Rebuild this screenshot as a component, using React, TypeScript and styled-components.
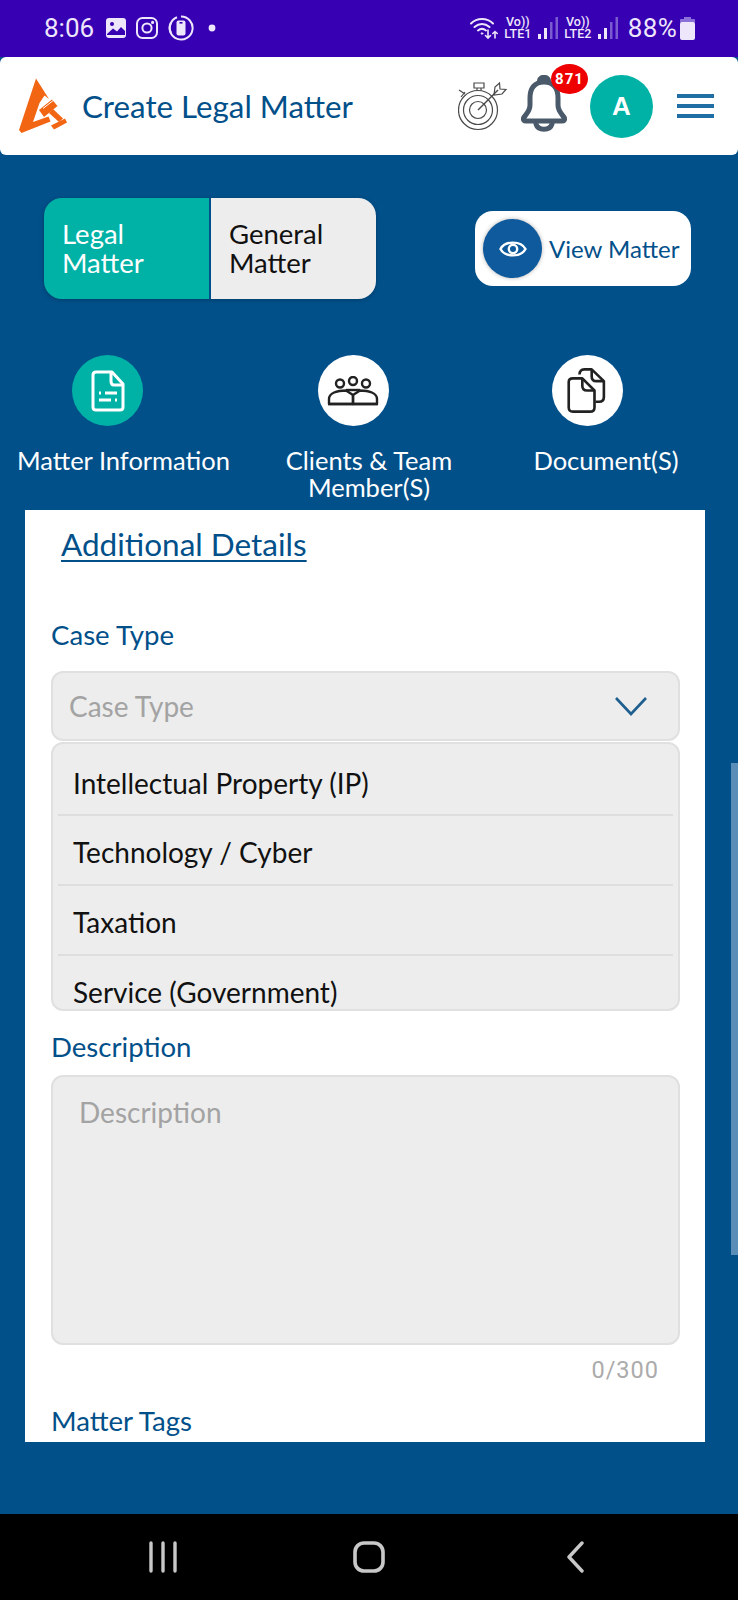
import styled, { createGlobalStyle } from 'styled-components'

const GlobalStyle = createGlobalStyle`
    html, body {
        margin: 0;
        padding: 0;
        background: #02508a;
    }
    * {
        box-sizing: border-box;
    }
`

const Page = styled.div`
    position: relative;
    width: 738px;
    height: 1600px;
    display: flex;
    flex-direction: column;
    overflow: hidden;
    background: #02508a;
    font-family: Lato, "Open Sans", sans-serif;
`
const StatusBar = styled.div`
    height: 57px;
    flex: none;
    background: #3700b3;
    color: #eee6fb;
    font-family: Roboto, sans-serif;
    display: flex;
    align-items: center;
    justify-content: space-between;
    padding: 0 43px 1px 44px;
`
const StatusGroup = styled.div`
    display: flex;
    align-items: center;
    gap: ${(p: { $gap: number }) => p.$gap}px;
`
const Time = styled.span`
    font-size: 26px;
    margin-right: 2px;
`
const Percent = styled.span`
    font-size: 26px;
    letter-spacing: 0.3px;
    margin-left: 4px;
    margin-right: -3px;
`
const VoLte = styled.div`
    width: 28px;
    display: flex;
    flex-direction: column;
    align-items: center;
    font-size: 12.5px;
    font-weight: 500;
    line-height: 12px;
    white-space: nowrap;
`
const Header = styled.div`
    height: 98px;
    flex: none;
    background: #fff;
    border-radius: 6px;
    display: flex;
    align-items: center;
    padding: 0 24px 0 17px;
`
const Title = styled.h1`
    margin: 0 0 0 15px;
    font-size: 31.3px;
    font-weight: 400;
    color: #02508a;
    white-space: nowrap;
`
const HeaderActions = styled.div`
    margin-left: auto;
    display: flex;
    align-items: center;
`
const BellWrap = styled.div`
    position: relative;
    width: 48px;
    height: 58px;
    margin-left: 12px;
    margin-top: -5px;
`
const Badge = styled.div`
    position: absolute;
    left: 31px;
    top: -11px;
    width: 37px;
    height: 30px;
    border-radius: 50%;
    background: #ee0000;
    color: #fff;
    font-family: Roboto, sans-serif;
    font-size: 15px;
    font-weight: 700;
    letter-spacing: 1px;
    display: flex;
    align-items: center;
    justify-content: center;
`
const Avatar = styled.div`
    width: 63px;
    height: 63px;
    border-radius: 50%;
    background: #00b2a6;
    color: #fff;
    font-family: "Liberation Sans", sans-serif;
    font-size: 26px;
    font-weight: 700;
    display: flex;
    align-items: center;
    justify-content: center;
    margin-left: 22px;
`
const Burger = styled.div`
    width: 37px;
    margin-left: 24px;
    display: flex;
    flex-direction: column;
    gap: 6px;
`
const BurgerLine = styled.span`
    height: 4px;
    background: #1f6fa5;
`
const TopRow = styled.div`
    display: flex;
    align-items: center;
    justify-content: space-between;
    padding: 43px 47px 0 44px;
`
const Toggle = styled.div`
    width: 332px;
    height: 101px;
    display: flex;
    border-radius: 18px;
    overflow: hidden;
    box-shadow: 0 1px 4px rgba(0, 0, 0, 0.25);
`
const ToggleOption = styled.div<{ $active?: boolean }>`
    width: ${(p) => (p.$active ? '165px' : '167px')};
    background: ${(p) => (p.$active ? '#00b2a6' : '#ededed')};
    color: ${(p) => (p.$active ? '#fff' : '#111')};
    border-left: ${(p) => (p.$active ? 'none' : '2px solid #02508a')};
    font-size: 27.5px;
    line-height: 29px;
    padding: 21px 0 0 18px;
`
const ViewButton = styled.div`
    width: 216px;
    height: 75px;
    background: #fff;
    border-radius: 18px;
    display: flex;
    align-items: center;
    padding-left: 8px;
    color: #02508a;
    font-size: 24px;
    white-space: nowrap;
`
const EyeCircle = styled.div`
    width: 59px;
    height: 59px;
    border-radius: 50%;
    background: #0f5a9c;
    box-shadow: 0 0 4px rgba(0, 0, 0, 0.3);
    display: flex;
    align-items: center;
    justify-content: center;
    margin-right: 7px;
`
const Steps = styled.div`
    display: grid;
    grid-template-columns: 247px 244px 230px;
    margin-top: 56px;
    height: 155px;
`
const Step = styled.div`
    display: flex;
    flex-direction: column;
    align-items: center;
`
const StepCircle = styled.div<{ $active?: boolean; $shift: number }>`
    width: 71px;
    height: 71px;
    border-radius: 50%;
    background: ${(p) => (p.$active ? '#00b2a6' : '#fff')};
    margin-right: ${(p) => p.$shift}px;
    display: flex;
    align-items: center;
    justify-content: center;
`
const StepLabel = styled.div`
    margin-top: 21px;
    color: #fff;
    font-size: 25.5px;
    line-height: 27px;
    text-align: center;
    white-space: nowrap;
`
const Panel = styled.div`
    height: 932px;
    margin: 0 33px 0 25px;
    background: #fff;
    overflow: hidden;
    padding: 0 25px 0 26px;
`
const SectionLink = styled.a`
    display: block;
    margin: 16px 0 0 10px;
    color: #02508a;
    font-size: 31.5px;
    line-height: 37px;
    text-decoration: underline;
    text-decoration-thickness: 2px;
    text-underline-offset: 4px;
`
const FieldLabel = styled.div<{ $top: number }>`
    margin-top: ${(p) => p.$top}px;
    color: #02508a;
    font-size: 27.6px;
    line-height: 34px;
`
const Select = styled.div`
    height: 70px;
    margin-top: 19px;
    background: #ededed;
    border: 2px solid #e0e0e0;
    border-radius: 12px;
    display: flex;
    align-items: center;
    justify-content: space-between;
    padding: 0 30px 0 16px;
    color: #a3a3a3;
    font-size: 28px;
`
const Dropdown = styled.div`
    height: 269px;
    margin-top: 1px;
    background: #ededed;
    border: 2px solid #e0e0e0;
    border-radius: 12px;
    overflow: hidden;
    padding: 0 5px;
`
const Option = styled.div`
    height: 70px;
    display: flex;
    align-items: center;
    padding: 4px 0 0 15px;
    color: #111;
    font-size: 28px;
    border-bottom: 2px solid #dedede;
    white-space: nowrap;
    &:first-child {
        height: 72px;
        padding-top: 8px;
    }
`
const TextArea = styled.div`
    height: 270px;
    margin-top: 11px;
    background: #ededed;
    border: 2px solid #e0e0e0;
    border-radius: 12px;
    padding: 18px 26px;
    color: #a3a3a3;
    font-size: 28px;
    line-height: 34px;
`
const Counter = styled.div`
    margin-top: 11px;
    padding-right: 21px;
    text-align: right;
    color: #ababab;
    font-family: Roboto, sans-serif;
    font-size: 23.5px;
    line-height: 28px;
    letter-spacing: 1px;
`
const NavBar = styled.div`
    height: 86px;
    flex: none;
    margin-top: auto;
    background: #000;
    display: flex;
    align-items: center;
    justify-content: center;
`
const NavCell = styled.div`
    width: 206px;
    display: flex;
    justify-content: center;
`
const Scrollbar = styled.div`
    position: absolute;
    right: 0;
    top: 763px;
    width: 7px;
    height: 492px;
    background: #5a8db8;
`

const Logo = () => (
    <svg width="50" height="70" viewBox="5 0 50 70">
        <path d="M24 7.5 L7 59 L9.5 62 L38.5 50.5 L36.5 45.5 L21 51 L27.5 32 L32.5 24.5 L37 28 Z" fill="#f26513" />
        <path d="M27 39 L40 28.5 L45.5 35 L32 46 Z" fill="#f26513" />
        <path d="M37 42 L41 38 L51 47.5 L47 51 Z" fill="#f26513" />
        <path d="M39 54.5 L53 47.5 L55 51.5 L42 58.5 Z" fill="#f26513" />
        <path d="M31 37.5 L42.5 28.5" stroke="#fff" strokeWidth="1" />
    </svg>
)

const PictureIcon = () => (
    <svg width="20" height="20" viewBox="0 0 20 20">
        <rect width="20" height="20" rx="3" fill="#eee6fb" />
        <circle cx="6" cy="6" r="2" fill="#3700b3" />
        <path d="M1 16 L7 10.5 L11 13.5 L15 9 L19 13 L19 17 L1 17 Z" fill="#3700b3" />
    </svg>
)

const InstagramIcon = () => (
    <svg width="22" height="22" viewBox="0 0 22 22" fill="none" stroke="#eee6fb" strokeWidth="2">
        <rect x="1" y="1" width="20" height="20" rx="5.5" />
        <circle cx="11" cy="11" r="4.6" />
        <circle cx="16.6" cy="5.4" r="0.6" fill="#eee6fb" />
    </svg>
)

const PhoneRingIcon = () => (
    <svg width="26" height="26" viewBox="0 0 26 26">
        <path d="M13 1.5 A11.5 11.5 0 1 1 3 7.5" fill="none" stroke="#eee6fb" strokeWidth="2" />
        <path d="M3 18 A11.5 11.5 0 0 1 9 2.2" fill="none" stroke="#eee6fb" strokeWidth="2" />
        <rect x="8.5" y="5.5" width="9" height="15" rx="2" fill="#eee6fb" />
        <rect x="11.5" y="7" width="3" height="1.6" fill="#3700b3" />
    </svg>
)

const WifiIcon = () => (
    <svg width="28" height="24" viewBox="0 0 28 24" fill="none" stroke="#eee6fb" strokeLinecap="round" strokeWidth="2">
        <path d="M1 7.5 C7 1.5 17 1.5 23 7.5" />
        <path d="M4.5 11 C9 7 15 7 19.5 11" />
        <path d="M8 14.5 C10.5 12.5 13.5 12.5 16 14.5" />
        <circle cx="12" cy="17.5" r="0.8" fill="#eee6fb" strokeWidth="1" />
        <path d="M18 14 V22 M15.5 19.5 L18 22 L20.5 19.5" strokeWidth="1.6" />
        <path d="M25 22 V15.5 M22.8 17.5 L25 15.5 L27.2 17.5" strokeWidth="1.6" />
    </svg>
)

const SignalBars = () => (
    <svg width="20" height="24" viewBox="0 0 20 24">
        <rect x="0" y="18" width="3" height="5" fill="#eee6fb" />
        <rect x="6" y="12" width="3" height="11" fill="#eee6fb" />
        <rect x="12" y="6" width="2.5" height="17" fill="#7a5bd0" />
        <rect x="17.5" y="1" width="2.5" height="22" fill="#7a5bd0" />
    </svg>
)

const BatteryIcon = () => (
    <svg width="15" height="23" viewBox="0 0 15 23">
        <rect x="4" y="0" width="7" height="3" fill="#8a70d8" />
        <rect x="0" y="2" width="15" height="4" rx="1" fill="#8a70d8" />
        <rect x="0" y="5" width="15" height="18" rx="2" fill="#eee6fb" />
    </svg>
)

const TargetIcon = () => (
    <svg width="50" height="50" viewBox="0 0 50 50" fill="none" stroke="#4a4a4a" strokeWidth="1.2">
        <circle cx="20" cy="29" r="19.5" />
        <circle cx="20" cy="29" r="14.5" />
        <circle cx="20" cy="29" r="8.5" />
        <path d="M20 29 L40 9" strokeWidth="1.4" />
        <path d="M36 14 L37 6 L41.5 2 L42 8 L48 8.5 L44 13 Z" />
        <path d="M16 2 H26 V7 H16 Z M19 7 V9.5 M23 7 V9.5" />
        <path d="M3 16 L7 11 M1 9 L7 13" />
    </svg>
)

const BellIcon = () => (
    <svg width="48" height="58" viewBox="0 0 48 58" fill="none" stroke="#4b5a6b" strokeWidth="5" strokeLinejoin="round" strokeLinecap="round">
        <path d="M24 7 C14 7 10 14 10 23 V30 C10 36 7 38 3.5 43 C3 45 4 46 6 46 H42 C44 46 45 45 44.5 43 C41 38 38 36 38 30 V23 C38 14 34 7 24 7 Z" />
        <path d="M20 5.5 C20 2 28 2 28 5.5" strokeWidth="6" />
        <path d="M16 49 C18 56 30 56 32 49" />
    </svg>
)

const DocListIcon = () => (
    <svg width="34" height="42" viewBox="0 0 34 42" fill="none" stroke="#fff" strokeWidth="3" strokeLinejoin="round">
        <path d="M5 2 H21 L32 14 V37 C32 39 31 40 29 40 H5 C3 40 2 39 2 37 V5 C2 3 3 2 5 2 Z" />
        <path d="M20 2 V11 C20 13 21 15 23 15 H32" />
        <path d="M8 23 H10 M14 23 H26 M8 30 H20 M24 30 H26" />
    </svg>
)

const TeamIcon = () => (
    <svg width="52" height="30" viewBox="0 0 52 30" fill="none" stroke="#222" strokeWidth="2.4" strokeLinejoin="round">
        <circle cx="13" cy="7.5" r="4" />
        <circle cx="26" cy="5" r="4" />
        <circle cx="39" cy="7.5" r="4" />
        <path d="M2 28 V23 C2 17 10 14.5 19 14.5 L26 19 V28 Z" />
        <path d="M50 28 V23 C50 17 42 14.5 33 14.5 L26 19 V28 Z" />
        <path d="M1 28 H51" />
        <path d="M19 14 H33" />
    </svg>
)

const DocsIcon = () => (
    <svg width="40" height="45" viewBox="0 0 42 48" fill="none" stroke="#222" strokeWidth="2.8" strokeLinejoin="round">
        <path d="M13 7 C13 3 15 1.5 18 1.5 H26 L39 14 V31 C39 34 37 36 34 36 H30" />
        <path d="M26 1.5 V9 C26 12 28 14 31 14 H39" />
        <path d="M6 11 H16 L29 24 V42 C29 45 27 46.5 24 46.5 H6 C3 46.5 1.5 45 1.5 42 V15 C1.5 12.5 3 11 6 11 Z" />
        <path d="M16 11 V19 C16 22 18 24 21 24 H29" />
    </svg>
)

const EyeIcon = () => (
    <svg width="28" height="24" viewBox="0 0 28 24" fill="none" stroke="#fff" strokeWidth="2.4">
        <path d="M1.5 12 C6 3.5 22 3.5 26.5 12 C22 20.5 6 20.5 1.5 12 Z" />
        <circle cx="14" cy="12" r="4.2" />
    </svg>
)

const ChevronIcon = () => (
    <svg width="34" height="20" viewBox="0 0 34 20" fill="none" stroke="#1f5f8f" strokeWidth="2.6">
        <path d="M2 2 L17 18 L32 2" />
    </svg>
)

const RecentsIcon = () => (
    <svg width="30" height="32" viewBox="0 0 30 32" stroke="#c8c8c8" strokeWidth="3.4" strokeLinecap="round">
        <path d="M3 2 V30 M15 2 V30 M27 2 V30" />
    </svg>
)

const HomeIcon = () => (
    <svg width="32" height="32" viewBox="0 0 32 32" fill="none" stroke="#c8c8c8" strokeWidth="3.6">
        <rect x="2" y="2" width="28" height="28" rx="9" />
    </svg>
)

const BackIcon = () => (
    <svg width="18" height="32" viewBox="0 0 18 32" fill="none" stroke="#c8c8c8" strokeWidth="3.4" strokeLinecap="round" strokeLinejoin="round">
        <path d="M16 2 L3 16 L16 30" />
    </svg>
)

export default function App() {
    return (
        <Page>
            <GlobalStyle />
            <StatusBar>
                <StatusGroup $gap={10}>
                    <Time>8:06</Time>
                    <PictureIcon />
                    <InstagramIcon />
                    <PhoneRingIcon />
                    <svg width="16" height="8" viewBox="0 0 16 8"><circle cx="8" cy="4" r="3.4" fill="#eee6fb" /></svg>
                </StatusGroup>
                <StatusGroup $gap={6}>
                    <WifiIcon />
                    <VoLte><span>Vo))</span><span>LTE1</span></VoLte>
                    <SignalBars />
                    <VoLte><span>Vo))</span><span>LTE2</span></VoLte>
                    <SignalBars />
                    <Percent>88%</Percent>
                    <BatteryIcon />
                </StatusGroup>
            </StatusBar>
            <Header>
                <Logo />
                <Title>Create Legal Matter</Title>
                <HeaderActions>
                    <TargetIcon />
                    <BellWrap>
                        <BellIcon />
                        <Badge>871</Badge>
                    </BellWrap>
                    <Avatar>A</Avatar>
                    <Burger>
                        <BurgerLine />
                        <BurgerLine />
                        <BurgerLine />
                    </Burger>
                </HeaderActions>
            </Header>
            <TopRow>
                <Toggle>
                    <ToggleOption $active>Legal<br />Matter</ToggleOption>
                    <ToggleOption>General<br />Matter</ToggleOption>
                </Toggle>
                <ViewButton>
                    <EyeCircle><EyeIcon /></EyeCircle>
                    View Matter
                </ViewButton>
            </TopRow>
            <Steps>
                <Step>
                    <StepCircle $active $shift={32}><DocListIcon /></StepCircle>
                    <StepLabel>Matter Information</StepLabel>
                </Step>
                <Step>
                    <StepCircle $shift={32}><TeamIcon /></StepCircle>
                    <StepLabel>Clients &amp; Team<br />Member(S)</StepLabel>
                </Step>
                <Step>
                    <StepCircle $shift={38}><DocsIcon /></StepCircle>
                    <StepLabel>Document(S)</StepLabel>
                </Step>
            </Steps>
            <Panel>
                <SectionLink>Additional Details</SectionLink>
                <FieldLabel $top={55}>Case Type</FieldLabel>
                <Select>
                    Case Type
                    <ChevronIcon />
                </Select>
                <Dropdown>
                    <Option>Intellectual Property (IP)</Option>
                    <Option>Technology / Cyber</Option>
                    <Option>Taxation</Option>
                    <Option>Service (Government)</Option>
                </Dropdown>
                <FieldLabel $top={19}>Description</FieldLabel>
                <TextArea>Description</TextArea>
                <Counter>0/300</Counter>
                <FieldLabel $top={20}>Matter Tags</FieldLabel>
            </Panel>
            <NavBar>
                <NavCell><RecentsIcon /></NavCell>
                <NavCell><HomeIcon /></NavCell>
                <NavCell><BackIcon /></NavCell>
            </NavBar>
            <Scrollbar />
        </Page>
    )
}
